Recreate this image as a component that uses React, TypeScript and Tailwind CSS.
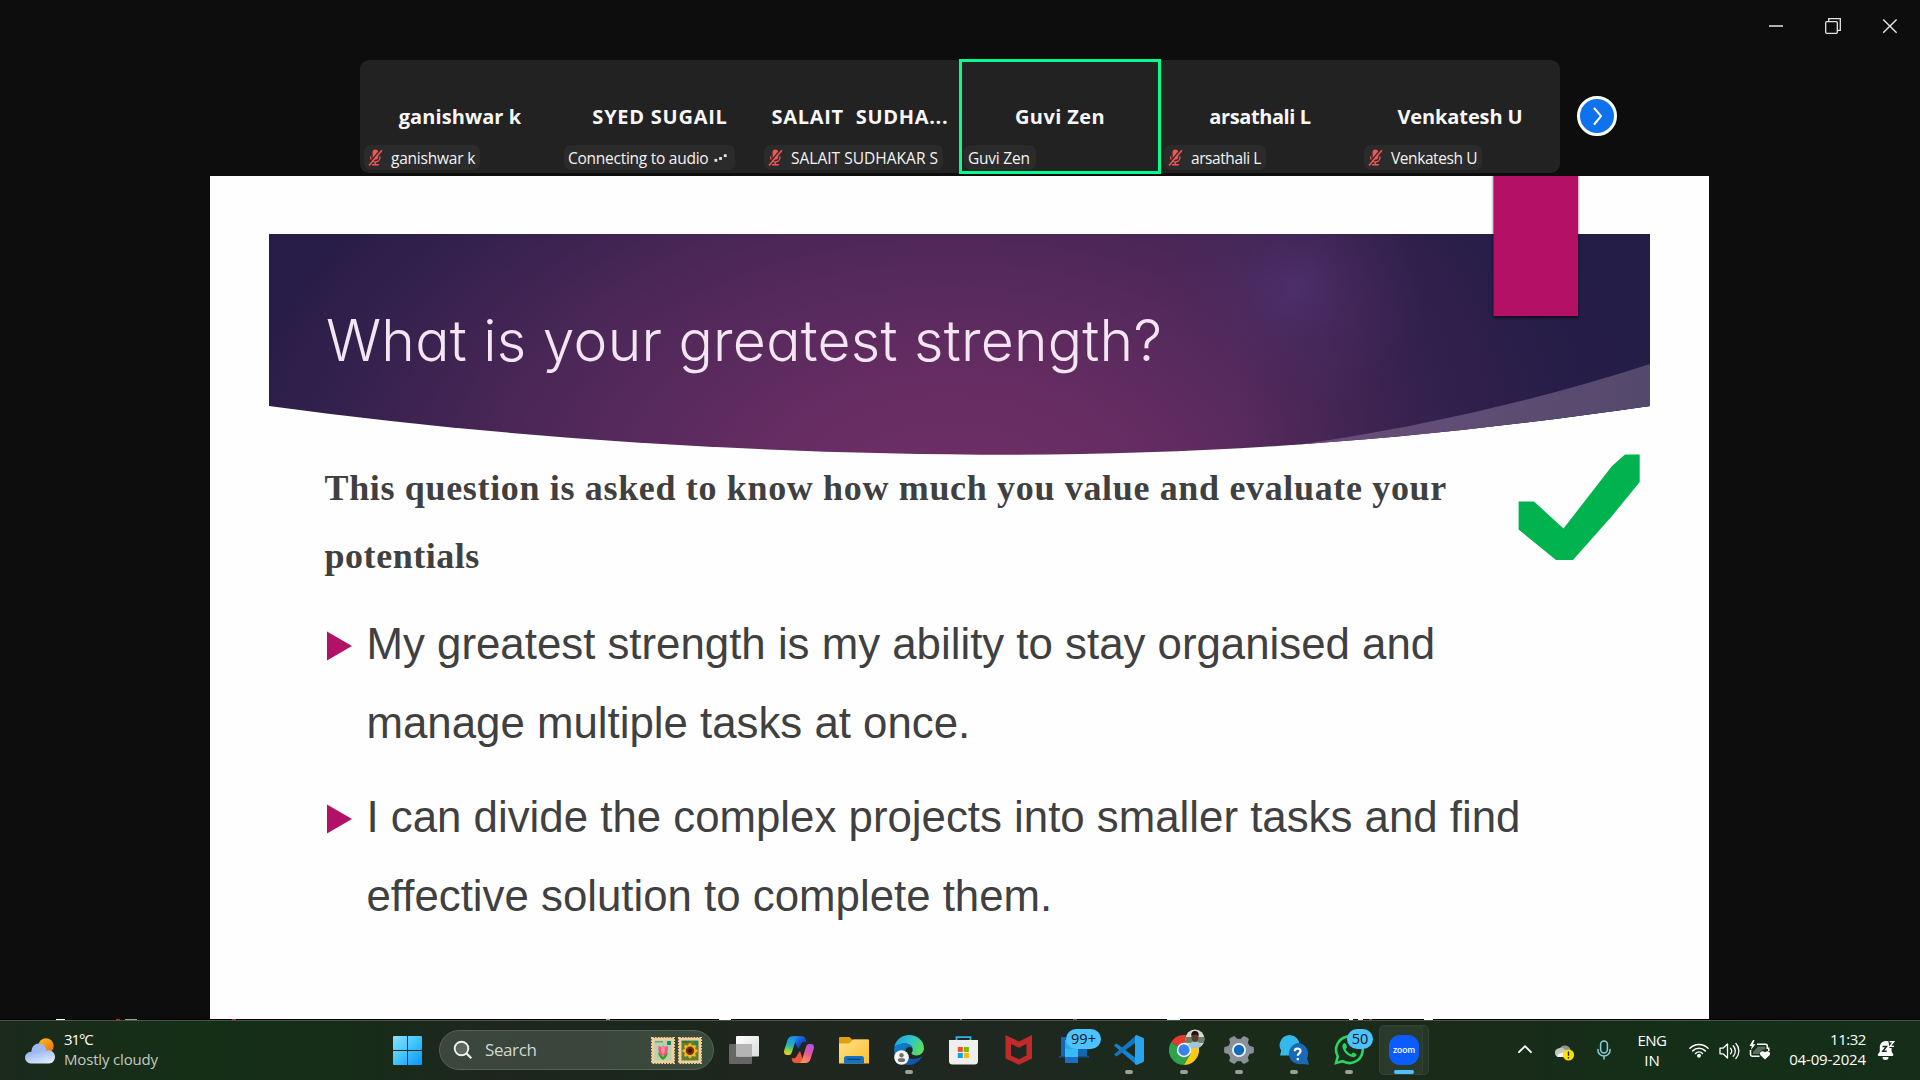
import type { ReactNode } from "react";

type Participant = {
  name: string;
  nameClass: string;
  label: string;
  labelClass: string;
  muted?: boolean;
  connecting?: boolean;
  active?: boolean;
};

const participants: Participant[] = [
  { name: "ganishwar k", nameClass: "tracking-[0.1px]", label: "ganishwar k", labelClass: "tracking-[-0.22px]", muted: true },
  { name: "SYED SUGAIL", nameClass: "tracking-[0.75px]", label: "Connecting to audio", labelClass: "tracking-[-0.26px]", connecting: true },
  { name: "SALAIT  SUDHA...", nameClass: "tracking-[0.7px]", label: "SALAIT SUDHAKAR S", labelClass: "tracking-[0.02px]", muted: true },
  { name: "Guvi Zen", nameClass: "tracking-[0.4px]", label: "Guvi Zen", labelClass: "tracking-[-0.22px]", active: true },
  { name: "arsathali L", nameClass: "tracking-[-0.4px]", label: "arsathali L", labelClass: "tracking-[-0.42px]", muted: true },
  { name: "Venkatesh U", nameClass: "tracking-[-0.1px]", label: "Venkatesh U", labelClass: "tracking-[-0.42px]", muted: true },
];

function MutedMic() {
  return (
    <svg viewBox="0 0 17 17" className="h-[17px] w-[17px] shrink-0">
      <rect x="5.600" y="0.600" width="5.600" height="10" rx="2.800" fill="#f25555" />
      <path d="M3.600 7.500v.8a4.700 4.700 0 0 0 9.400 0v-.8M8.300 13v2.500M4.800 15.800h7" fill="none" stroke="#f25555" strokeWidth="1.400" />
      <path d="M1.400 15 13.400 1" stroke="#2a2a2a" strokeWidth="1.500" />
      <path d="M2 16.400 14.900 1.200" stroke="#f25555" strokeWidth="1.600" />
    </svg>
  );
}

function Tile({ p }: { p: Participant }) {
  return (
    <div className="relative flex h-[113px] w-[200px] shrink-0 flex-col">
      <div className={"whitespace-pre pt-[42px] text-center text-[20px] font-bold leading-[30px] text-[#f7f7f7] " + p.nameClass}>{p.name}</div>
      <div className="mt-[13px] flex pl-[4px]">
        <div
          className={
            "flex h-[25px] items-center rounded-[7px] bg-[#2b2b2b] text-[15.5px] text-[#f4f4f4] " +
            (p.muted ? "gap-[7px] pl-[3px] pr-[5px]" : "gap-[6px] pl-[4px] pr-[6px]")
          }
        >
          {p.muted && <MutedMic />}
          <span className={"whitespace-nowrap pt-[1px] leading-[25px] " + p.labelClass}>{p.label}</span>
          {p.connecting && (
            <svg viewBox="0 0 16 12" className="h-[12px] w-[15px]" fill="#e8e8e8">
              <rect x="0.500" y="7" width="3" height="3" />
              <rect x="5.500" y="5" width="3" height="3" />
              <rect x="10.500" y="2" width="3" height="3" />
            </svg>
          )}
        </div>
      </div>
      {p.active && <div className="absolute -left-[1px] -top-[1px] h-[115px] w-[202px] border-[3px] border-[#00ff8f]" />}
    </div>
  );
}

function Gallery() {
  return (
    <div className="flex h-[116px] shrink-0 items-start pl-[360px]">
      <div className="flex h-[113px] rounded-[9px] bg-[#222222]">
        {participants.map((p) => (
          <Tile key={p.name} p={p} />
        ))}
      </div>
      <div className="ml-[17px] mt-[36px] flex h-[40px] w-[40px] items-center justify-center rounded-full border-[3.5px] border-white bg-[#0e72ed]">
        <svg viewBox="0 0 20 20" className="h-[20px] w-[20px]">
          <path d="M7.500 2.500 14 10.200 7.500 18" fill="none" stroke="#fff" strokeWidth="2" strokeLinecap="round" strokeLinejoin="round" />
        </svg>
      </div>
    </div>
  );
}

const bannerShape = "M59 58H1440V230C1220 262 1020 278.500 800 278.700C560 278.500 300 263 59 230Z";

function Banner() {
  return (
    <svg viewBox="0 0 1500 843" className="absolute left-0 top-0 h-[843px] w-[1500px]">
      <defs>
        <radialGradient id="glow" gradientUnits="userSpaceOnUse" cx="0" cy="0" r="1" gradientTransform="translate(740 320) scale(730 460)">
          <stop offset="0" stopColor="#703066" />
          <stop offset="0.300" stopColor="#632c61" />
          <stop offset="0.600" stopColor="#4c2758" />
          <stop offset="0.850" stopColor="#35214e" />
          <stop offset="1" stopColor="#281d48" />
        </radialGradient>
        <radialGradient id="spot" gradientUnits="userSpaceOnUse" cx="1084" cy="112" r="130">
          <stop offset="0" stopColor="#4f3170" stopOpacity="0.800" />
          <stop offset="0.400" stopColor="#4c2d66" stopOpacity="0.450" />
          <stop offset="1" stopColor="#4a2a60" stopOpacity="0" />
        </radialGradient>
        <linearGradient id="edge" x1="0" x2="1">
          <stop offset="0.700" stopColor="#241d47" stopOpacity="0" />
          <stop offset="0.940" stopColor="#241d47" stopOpacity="0.850" />
          <stop offset="1" stopColor="#241d47" />
        </linearGradient>
        <linearGradient id="sliver" x1="0" x2="1">
          <stop offset="0" stopColor="#6d4c7a" />
          <stop offset="0.500" stopColor="#5f4d74" />
          <stop offset="1" stopColor="#53496c" />
        </linearGradient>
        <filter id="shade" x="-10%" y="-10%" width="120%" height="120%" colorInterpolationFilters="sRGB">
          <feDropShadow dx="0" dy="2" stdDeviation="1.600" floodColor="#000" floodOpacity="0.600" />
        </filter>
        <clipPath id="bannerClip">
          <path d={bannerShape} />
        </clipPath>
      </defs>
      <path d={bannerShape} fill="url(#glow)" />
      <path d={bannerShape} fill="url(#edge)" />
      <g clipPath="url(#bannerClip)">
        <rect x="940" y="58" width="280" height="200" fill="url(#spot)" />
        <path d="M1440 188V290H1084V269.500Q1270 243 1440 188Z" fill="url(#sliver)" />
      </g>
      <rect x="1283.500" y="-6" width="84.500" height="146" fill="#b41166" filter="url(#shade)" />
      <path d="M1308.600 325.500H1324L1353.500 352.500L1402 290L1415 278.500H1429.700V306L1402 340L1363 384H1346L1308.600 353.500Z" fill="#00b34e" />
    </svg>
  );
}

function Bullet({ lines }: { lines: string[] }) {
  return (
    <div className="flex">
      <svg viewBox="0 0 26 32" className="mt-[25px] h-[32px] w-[26px] shrink-0">
        <path d="M1 1.500 26 16 1 30.500Z" fill="#b31166" />
      </svg>
      <div className="ml-[14.5px] text-[43.8px] leading-[78.6px]">
        {lines.map((l) => (
          <div key={l} className="whitespace-nowrap">
            {l}
          </div>
        ))}
      </div>
    </div>
  );
}

function Slide() {
  return (
    <div className="relative ml-[210px] flex h-[843px] w-[1499px] shrink-0 flex-col overflow-hidden bg-[#fefefe] pl-[116px] text-[#404040]">
      <Banner />
      <div className="relative h-[279px] shrink-0 whitespace-nowrap pt-[130px] font-['Inter',sans-serif] text-[57px] font-light leading-[70px] tracking-[0.25px] text-[#f3e6f2] [font-feature-settings:'cv11']">
        What is your greatest strength?
      </div>
      <div className="relative -ml-[1.5px] h-[150px] shrink-0 whitespace-nowrap font-['Liberation_Serif',serif] text-[36px] font-bold leading-[67.5px]">
        <div className="tracking-[0.66px]">This question is asked to know how much you value and evaluate your</div>
        <div className="tracking-[0.54px]">potentials</div>
      </div>
      <div className="relative flex flex-col gap-[16px] font-['Liberation_Sans',sans-serif]">
        <Bullet lines={["My greatest strength is my ability to stay organised and", "manage multiple tasks at once."]} />
        <Bullet lines={["I can divide the complex projects into smaller tasks and find", "effective solution to complete them."]} />
      </div>
    </div>
  );
}

function WindowControls() {
  return (
    <div className="flex h-[60px] shrink-0 items-start justify-end pr-[22px] pt-[17px]">
      <svg viewBox="0 0 130 18" className="h-[18px] w-[130px]" fill="none" stroke="#e6e6e6">
        <path d="M1 9h14" stroke="#b0b0b0" strokeWidth="2" />
        <rect x="57.700" y="4.700" width="11.600" height="11.600" rx="1" strokeWidth="1.300" />
        <path d="M60.700 4.500V1.700H72.300V13.300H69.500" strokeWidth="1.300" />
        <path d="M115.200 2.400 128.600 15.800M128.600 2.400 115.200 15.800" strokeWidth="1.400" />
      </svg>
    </div>
  );
}

const specks = [
  { w: 9, ml: 56, c: "#ffffff" },
  { w: 4, ml: 51, c: "#f0124f" },
  { w: 12, ml: 5, c: "#a0a0a0" },
  { w: 4, ml: 95, c: "#f0124f" },
  { w: 4, ml: 370, c: "#999999" },
  { w: 12, ml: 109, c: "#ffffff" },
  { w: 2, ml: 229, c: "#8c7a20" },
  { w: 4, ml: 111, c: "#555555" },
  { w: 13, ml: 90, c: "#e8f5e8" },
  { w: 4, ml: 169, c: "#ffffff" },
  { w: 5, ml: 5, c: "#ffffff" },
  { w: 3, ml: 6, c: "#f0124f" },
  { w: 9, ml: 52, c: "#ffffff" },
];

function Specks() {
  return (
    <div className="flex h-[1px] shrink-0 bg-black">
      {specks.map((s, i) => (
        <div key={i} className="h-[1px]" style={{ width: s.w, marginLeft: s.ml, backgroundColor: s.c }} />
      ))}
    </div>
  );
}

function Weather() {
  return (
    <svg viewBox="0 0 30 26" className="h-[26px] w-[30px] shrink-0">
      <defs>
        <linearGradient id="sun" x1="0" y1="0" x2="0.600" y2="1">
          <stop offset="0" stopColor="#fbbf24" />
          <stop offset="1" stopColor="#f0700c" />
        </linearGradient>
        <linearGradient id="cloud" x1="0" y1="0" x2="0.600" y2="1">
          <stop offset="0" stopColor="#88aaf0" />
          <stop offset="1" stopColor="#dbe9fd" />
        </linearGradient>
      </defs>
      <circle cx="21" cy="8" r="7.700" fill="url(#sun)" />
      <circle cx="14" cy="13" r="7.600" fill="#9db9f2" />
      <path d="M6 25.400a5.800 5.800 0 0 1-.4-11.600 8.600 8.600 0 0 1 6 1.400A8 8 0 0 1 21 12.800a6.400 6.400 0 0 1 9 5.600c0 4.200-2.600 7-6 7z" fill="url(#cloud)" />
    </svg>
  );
}

function Tulip() {
  return (
    <svg viewBox="0 0 24 27" className="h-[27px] w-[24px]">
      <rect x="1" y="1" width="22" height="25" fill="#f0cf9a" stroke="#f0cf9a" strokeWidth="2" strokeDasharray="1.800 1.100" />
      <rect x="3.500" y="3.500" width="17" height="20" fill="#b9d2ae" />
      <path d="M4 4h8v1.500H4z" fill="#6fa77f" />
      <rect x="16" y="4" width="4" height="4" fill="#1e8a62" />
      <path d="M7 15.500c1 4 2.500 6 5 7.500 2.500-1.500 4-3.500 5-7.500-2 1-3.500 2.200-5 4.500-1.500-2.300-3-3.500-5-4.500z" fill="#3c9a22" />
      <path d="M7.500 9 10 10l2-1.800L14 10l2.800-1c.5 5-.8 9.500-4.800 9.500S7 14 7.500 9z" fill="#f4547c" />
      <path d="M10.500 10.500 12 8.500l1.600 2c.6 3 .2 5.500-1.600 7-1.800-1.500-2.200-4-1.500-7z" fill="#fb8fa6" />
    </svg>
  );
}

function Sunflower() {
  return (
    <svg viewBox="0 0 24 27" className="h-[27px] w-[24px]">
      <rect x="1" y="1" width="22" height="25" fill="#f0cf9a" stroke="#f0cf9a" strokeWidth="2" strokeDasharray="1.800 1.100" />
      <rect x="3.500" y="3.500" width="17" height="20" fill="#5f7f35" />
      <path d="M4 4h8v1.500H4z" fill="#3b6a38" />
      <rect x="16" y="4" width="4" height="4" fill="#1c8a52" />
      <g fill="#f7b71a">
        {[0, 45, 90, 135].map((a) => (
          <ellipse key={a} cx="12" cy="13.800" rx="7.800" ry="2.700" transform={`rotate(${a} 12 13.8)`} />
        ))}
      </g>
      <circle cx="12" cy="13.800" r="4.200" fill="#7a2c12" />
      <circle cx="12" cy="13.800" r="2" fill="#45150b" />
    </svg>
  );
}

function Badge({ children, className }: { children: ReactNode; className: string }) {
  return (
    <div className={"absolute flex h-[20px] items-center justify-center rounded-full bg-[#4cc2ff] text-[14.5px] leading-[20px] text-[#0b1720] " + className}>{children}</div>
  );
}

function AppIcon({ children, running, active, badge }: { children: ReactNode; running?: boolean; active?: boolean; badge?: ReactNode }) {
  return (
    <div className="relative flex h-[60px] w-[30px] shrink-0 flex-col items-center pt-[15px]">
      {active && (
        <>
          <div className="absolute -left-[10px] top-[5px] h-[50px] w-[50px] rounded-[5px] border border-[#334234] bg-[#253626]" />
          <div className="absolute -left-[10px] top-[5px] h-[50px] w-[44px] rounded-[5px] border border-[#334234] bg-[#2a3a2b]" />
        </>
      )}
      <svg viewBox="0 0 30 30" className="relative h-[30px] w-[30px] shrink-0">
        {children}
      </svg>
      {running && <div className="mt-[5px] h-[4px] w-[8px] rounded-full bg-[#99a098]" />}
      {active && <div className="relative mt-[5px] h-[4px] w-[20px] shrink-0 rounded-full bg-[#4cc2ff]" />}
      {badge}
    </div>
  );
}

function Apps() {
  return (
    <div className="flex gap-[25px]">
      <AppIcon>
        <defs>
          <linearGradient id="tvFront" x1="0" y1="0" x2="1" y2="1">
            <stop offset="0" stopColor="#fff" />
            <stop offset="1" stopColor="#dcdcdc" />
          </linearGradient>
        </defs>
        <rect x="0" y="9" width="23" height="20" rx="1" fill="#666" />
        <rect x="7" y="1" width="23" height="20.500" rx="1" fill="url(#tvFront)" />
        <path d="M7 9h16v12.500H8a1 1 0 0 1-1-1z" fill="#b4b4b4" />
      </AppIcon>
      <AppIcon>
        <defs>
          <linearGradient id="cpA" x1="0.500" y1="0" x2="0.300" y2="1">
            <stop offset="0" stopColor="#178fe8" />
            <stop offset="0.500" stopColor="#27b2b9" />
            <stop offset="0.750" stopColor="#8fd04a" />
            <stop offset="1" stopColor="#f4d30c" />
          </linearGradient>
          <linearGradient id="cpB" x1="0.800" y1="0" x2="0.300" y2="1">
            <stop offset="0" stopColor="#a855f0" />
            <stop offset="0.450" stopColor="#e653a2" />
            <stop offset="1" stopColor="#ff9a4d" />
          </linearGradient>
          <linearGradient id="cpC" x1="0" y1="0" x2="1" y2="1">
            <stop offset="0" stopColor="#1f9cf5" />
            <stop offset="0.600" stopColor="#1446c8" />
            <stop offset="1" stopColor="#0f3bb0" />
          </linearGradient>
        </defs>
        <path d="M17 9.500C18 7 19 6.500 22.500 6.800L22 5C21.400 2.700 20.500 1.200 18 1.200H8.500L14 14z" fill="url(#cpC)" />
        <path d="M13 20.500C12 23 11 23.500 7.500 23.200L8 25c.6 2.300 1.500 2.900 4 2.900h8L16 16z" fill="#f2573e" />
        <path d="M8.500 1.200H15c-2 0-2.700 2-3.300 4L8 17c-.8 2.500-2 3-4 3H3C.5 20-.5 18 .3 15L3.500 5c.8-2.500 2.300-3.800 5-3.800z" fill="url(#cpA)" />
        <path d="M21.500 27.900H15c2 0 2.700-2 3.300-4L22 12c.8-2.500 2-3 4-3h1c2.500 0 3.500 2 2.700 5L26.500 24c-.8 2.500-2.300 3.900-5 3.900z" fill="url(#cpB)" />
      </AppIcon>
      <AppIcon>
        <defs>
          <linearGradient id="folder" x1="0" y1="0" x2="1" y2="1">
            <stop offset="0" stopColor="#ffe08a" />
            <stop offset="1" stopColor="#fbc02d" />
          </linearGradient>
        </defs>
        <path d="M0 3a1 1 0 0 1 1-1h8.500c1 0 1.500.3 2.300 1.200L13 4.500h16a1 1 0 0 1 1 1V12H0z" fill="#e0a20c" />
        <path d="M0 8.500h9c1.500 0 2-.5 3-1.700l1.300-1.500c.5-.5 1-.8 1.700-.8h14a1 1 0 0 1 1 1V28.500H0z" fill="url(#folder)" />
        <path d="M5 28.500V23.500a2.500 2.500 0 0 1 2.500-2.500h15a2.500 2.500 0 0 1 2.500 2.500v5z" fill="#1273c4" />
        <path d="M8.500 24.300h13" stroke="#0a3f78" strokeWidth="1.200" />
      </AppIcon>
      <AppIcon running>
        <defs>
          <linearGradient id="edgeTop" x1="0" y1="0.300" x2="1" y2="0.600">
            <stop offset="0" stopColor="#1fa5dc" />
            <stop offset="0.500" stopColor="#30c3d0" />
            <stop offset="1" stopColor="#5fe04f" />
          </linearGradient>
          <linearGradient id="edgeBody" x1="0" y1="0" x2="1" y2="1">
            <stop offset="0" stopColor="#1484d8" />
            <stop offset="1" stopColor="#0c4a9c" />
          </linearGradient>
        </defs>
        <path d="M.4 12C1.500 5 7.500 0 15 0c8.500 0 15 6 15 13 0 4.500-3.500 7.500-7.500 7.500-3 0-5-1-5-2.200 0-.9 1.200-1.300 1.200-3.600C18.700 11 15 8.500 11 8.500 6 8.500 2 10.500.4 12z" fill="url(#edgeTop)" />
        <path d="M.2 13C2 9.500 6.500 8.400 11 8.500c4 .1 6.500 2 7.300 4.500-1.500-1.500-5-1.500-6.500 1.500-2 4 1 9.500 7 9.500 3.500 0 6-1 8.200-2.300.6-.3 1 .2.6.8C25 26.500 20.500 30 15 30 6.500 30-.7 23 .2 13z" fill="url(#edgeBody)" />
        <circle cx="7.500" cy="22.500" r="7.300" fill="#f5f5f5" />
        <circle cx="7.500" cy="20.200" r="2.200" fill="#707070" />
        <rect x="3.800" y="23.300" width="7.400" height="3.600" rx="1.800" fill="#707070" />
      </AppIcon>
      <AppIcon>
        <path d="M7.500 6V2.200h14V6" fill="none" stroke="#2cb5ea" strokeWidth="1.800" />
        <path d="M0 5h29v21a3.500 3.500 0 0 1-3.500 3.500h-22A3.500 3.500 0 0 1 0 26z" fill="#efefef" />
        <rect x="8.800" y="12" width="5" height="5" fill="#f25022" />
        <rect x="14.900" y="12" width="5" height="5" fill="#7fba00" />
        <rect x="8.800" y="18" width="5" height="5" fill="#00a4ef" />
        <rect x="14.900" y="18" width="5" height="5" fill="#ffb900" />
      </AppIcon>
      <AppIcon>
        <path fillRule="evenodd" d="M1.500 0 15 6.500 28 0V23.500L15 29.800 1.500 23.500zM7 9v11.500L15 24.300l7.500-3.800V9L15 12.800z" fill="#bf2a2a" />
      </AppIcon>
      <AppIcon badge={<Badge className="left-[7px] top-[9px] w-[35px]">99+</Badge>}>
        <path d="M2 2h26v20H2z" fill="#1565b5" />
        <path d="M0 21h30v1.500H0z" fill="#0f4f94" />
        <path d="M6 5h13v23H6z" fill="#2aaee8" />
        <path d="M6 14h13v8H6z" fill="#35bdf2" />
        <path d="M6 22h13v6H6z" fill="#1c6cc4" />
      </AppIcon>
      <AppIcon running>
        <path d="M0 10.500 2.500 8.500 22.500 23.500V30z" fill="#1384cf" />
        <path d="M0 19.500 2.500 21.600 22.500 7V0z" fill="#0f78c0" />
        <path d="M22.500 0 29 2.800q1 .4 1 1.400V25.800q0 1-1 1.400L22.500 30 21 29V1z" fill="#2ba4ee" />
      </AppIcon>
      <AppIcon
        running
        badge={
          <svg viewBox="0 0 20 20" className="absolute left-[16px] top-[9px] h-[20px] w-[20px]">
            <defs>
              <clipPath id="avatar">
                <circle cx="10" cy="10" r="9.500" />
              </clipPath>
            </defs>
            <g clipPath="url(#avatar)">
              <rect width="20" height="20" fill="#d8d8d4" />
              <rect y="8" width="20" height="6" fill="#6d7f66" />
              <path d="M3 20c0-5 3-7.500 7-7.500s7 2.500 7 7.500z" fill="#9fc5d8" />
              <ellipse cx="10" cy="8" rx="3.600" ry="5" fill="#5a3b2c" />
              <path d="M6.200 7c0-4 1.500-5 3.800-5s3.800 1 3.800 5c-1-2-6.600-2-7.600 0z" fill="#1c1512" />
            </g>
          </svg>
        }
      >
        <path d="M15 15 2 7.500A15 15 0 0 1 28 7.500H15z" fill="#e53b2f" />
        <path d="M15 15 2 7.500A15 15 0 0 0 15 30l6.500-11.200z" fill="#2fa24c" />
        <path d="M28 7.500H15L21.500 18.800 15 30A15 15 0 0 0 28 7.500z" fill="#fbc816" />
        <circle cx="15" cy="15" r="7.200" fill="#fff" />
        <circle cx="15" cy="15" r="5.700" fill="#3a82ee" />
      </AppIcon>
      <AppIcon running>
        <g fill="#8a9098">
          <circle cx="15" cy="15" r="11.300" />
          {[0, 60, 120, 180, 240, 300].map((a) => (
            <path key={a} d="M24 10.500 29.500 12q.8 3 0 6L24 19.500z" transform={`rotate(${a} 15 15)`} />
          ))}
        </g>
        <circle cx="15" cy="15" r="7" fill="#f2f2f2" />
        <circle cx="15" cy="15" r="5.200" fill="#0f6cbd" />
      </AppIcon>
      <AppIcon running>
        <path d="M10.500 0a10.200 10.200 0 0 1 0 20.400H1l1.200-4.800A10.200 10.200 0 0 1 10.500 0z" fill="#35b8ea" />
        <path d="M18.500 8a10.600 10.600 0 0 1 9.600 15.200L30 29.700l-7-.6A10.700 10.700 0 1 1 18.500 8z" fill="#1a68b8" />
        <path d="M15.700 16.300c0-3.600 5.800-3.500 5.800-.2 0 2.200-2.700 2.300-2.700 4.600M18.800 23v2.300" fill="none" stroke="#fff" strokeWidth="2.200" />
      </AppIcon>
      <AppIcon running badge={<Badge className="left-[13px] top-[9px] w-[26px]">50</Badge>}>
        <path d="M2 28 3.800 21.300A13.300 13.300 0 1 1 8.600 26.200z" fill="#1a2e1a" stroke="#2bd366" strokeWidth="2.600" />
        <path d="M10.800 8c-1.700.2-2.800 2-2.300 4.200 1 4.600 5.200 8.900 9.900 9.900 2 .4 4-.6 4.200-2.600 0-.6-3.200-2.300-3.700-2.100-.7.2-1.200 1.900-1.900 1.900-1.600-.4-4.700-3.300-5.300-5 0-.6 1.300-1.300 1.400-2 0-.5-1.300-4.200-2.300-4.300z" fill="#2bd366" />
      </AppIcon>
      <AppIcon active>
        <rect x="0" y="0" width="30" height="30" rx="11" fill="#0b5cff" />
        <text x="15" y="17.600" textAnchor="middle" fontSize="9.500" fontWeight="600" fontFamily="Lato, sans-serif" fill="#fff" textLength="22" lengthAdjust="spacingAndGlyphs">
          zoom
        </text>
      </AppIcon>
    </div>
  );
}

function Tray() {
  return (
    <div className="ml-auto flex h-[60px] items-start pr-[25px] text-[15px] leading-[20px] text-white">
      <svg viewBox="0 0 16 10" className="mt-[23px] h-[10px] w-[16px]">
        <path d="M2 8.200 8 2.200l6 6" fill="none" stroke="#fff" strokeWidth="1.900" strokeLinecap="round" strokeLinejoin="round" />
      </svg>
      <svg viewBox="0 0 21 18" className="ml-[21px] mt-[22px] h-[18px] w-[21px]">
        <path d="M6 5a6 6 0 0 1 10.500 1.500l2 5L8 13z" fill="#8f958f" />
        <path d="M4.500 14a4.400 4.400 0 0 1-.5-8.500 7 7 0 0 1 8 2L14 14z" fill="#c2c7c2" />
        <path d="M3 13.500c1-3.500 6-5 9-2.500v3H4z" fill="#f4f4f4" />
        <circle cx="14.500" cy="12" r="5.600" fill="#fde100" />
        <path d="M14.500 8.500v4.300M14.500 14v1.600" stroke="#222" strokeWidth="1.400" />
      </svg>
      <svg viewBox="0 0 14 20" className="ml-[22px] mt-[19px] h-[20px] w-[14px]" fill="none" stroke="#86cfe0" strokeWidth="1.500" strokeLinecap="round">
        <rect x="3.600" y="1" width="6.800" height="12" rx="3.400" />
        <path d="M.9 9.500v.5a6.100 6.100 0 0 0 12.200 0v-.5M7 16.200V19" />
      </svg>
      <div className="ml-[25px] mt-[9px] flex w-[32px] flex-col items-center">
        <span className="tracking-[-0.5px]">ENG</span>
        <span>IN</span>
      </div>
      <svg viewBox="0 0 20 16" className="ml-[21px] mt-[21px] h-[16px] w-[20px]" fill="none" stroke="#fff" strokeWidth="1.500" strokeLinecap="round">
        <path d="M.9 6.200a12.800 12.800 0 0 1 18.200 0" />
        <path d="M3.700 8.900a8.900 8.900 0 0 1 12.600 0" />
        <path d="M6.500 11.500a5 5 0 0 1 7 0" />
        <circle cx="10" cy="13.800" r="1.200" fill="#fff" />
      </svg>
      <svg viewBox="0 0 21 18" className="ml-[10px] mt-[21px] h-[18px] w-[21px]" fill="none" stroke="#fff" strokeWidth="1.300" strokeLinecap="round" strokeLinejoin="round">
        <path d="M1 6.200h3L8.500 2v14L4 11.800H1z" />
        <path d="M11.500 6.300a4 4 0 0 1 0 5.400M14.200 3.800a7.500 7.500 0 0 1 0 10.400M16.900 1.500a11 11 0 0 1 0 15" />
      </svg>
      <svg viewBox="0 0 21 20" className="ml-[9px] mt-[19px] h-[20px] w-[21px]">
        <path d="M8 4.300h8.500A1.800 1.800 0 0 1 18.300 6V9M10.500 16.200H3.300A1.800 1.800 0 0 1 1.500 14.500V10" fill="none" stroke="#fff" strokeWidth="1.600" />
        <path d="M19 7.500h1.500v3.500H19z" fill="#fff" />
        <path d="M9 6.500h7.300V9.500C13 9.500 10.300 11.500 10.800 14H4V12z" fill="#fff" opacity="0.300" />
        <path d="M4 0 .5 6h2.300L2 9.800 6.500 4.300H4L5.500 0z" fill="#fff" />
        <path d="M16 19.500 11.500 15.300C9.500 12.500 13 9.500 16 12.300c3-2.800 6.500.2 4.500 3z" fill="#fff" />
      </svg>
      <div className="ml-[18px] mt-[8px] flex w-[78px] flex-col items-end">
        <span className="tracking-[-0.45px]">11:32</span>
        <span className="tracking-[-0.14px]">04-09-2024</span>
      </div>
      <svg viewBox="0 0 18 20" className="ml-[11px] mt-[19px] h-[20px] w-[18px]">
        <path d="M8.500 1C5 1.300 2.800 4 2.800 7.300V11.500L1 14.300c-.5.800 0 1.700.9 1.700h13.400c.9 0 1.400-.9.900-1.700L14.600 11.500V7L14 1.500z" fill="#fff" />
        <path d="M5.500 17h6a3 3 0 0 1-6 0z" fill="#fff" />
        <path d="M11.200 0H18v8h-5.500z" fill="#15301a" />
        <path d="M5.500 6.500h4L5.800 11.200h4" fill="none" stroke="#15301a" strokeWidth="1.500" />
        <path d="M12.600 1.800h4l-3.600 4.600h4" fill="none" stroke="#fff" strokeWidth="1.400" />
      </svg>
    </div>
  );
}

function Taskbar() {
  return (
    <div className="flex h-[60px] shrink-0 items-start border-t border-[#4a524a] bg-[linear-gradient(90deg,#1b2a1b_0px,#152f17_180px,#162e18_330px,#1e261f_500px,#1b281c_640px,#1f261f_760px,#1e2820_1000px,#1a2b1a_1200px,#1a2b19_1450px,#142f18_1700px,#152d19_1920px)]">
      <div className="flex w-[393px] shrink-0 pl-[25px]">
        <div className="pt-[17px]">
          <Weather />
        </div>
        <div className="ml-[9px] pt-[8px] text-[15px] leading-[20px]">
          <div className="tracking-[-1.1px] text-white">31°C</div>
          <div className="tracking-[-0.17px] text-[#c3c9c3]">Mostly cloudy</div>
        </div>
      </div>
      <svg viewBox="0 0 29 29" className="mt-[15px] h-[29px] w-[29px] shrink-0">
        <defs>
          <linearGradient id="win" x1="0" y1="0" x2="1" y2="1">
            <stop offset="0" stopColor="#8be2ff" />
            <stop offset="0.500" stopColor="#40c4fc" />
            <stop offset="1" stopColor="#0a94fa" />
          </linearGradient>
        </defs>
        <path d="M0 1q0-1 1-1H14V14H0zM15 0H28q1 0 1 1V14H15zM0 15H14V29H1q-1 0-1-1zM15 15H29V28q0 1-1 1H15z" fill="url(#win)" />
      </svg>
      <div className="ml-[17px] mt-[9px] flex h-[40px] w-[275px] shrink-0 items-center rounded-full border border-[#566156] bg-[linear-gradient(90deg,#3b463c,#3a453c_50%,#394c39)] pl-[13px]">
        <svg viewBox="0 0 20 20" className="h-[20px] w-[20px]">
          <circle cx="8.500" cy="8.500" r="6.800" fill="#5d675f" stroke="#eef1ee" strokeWidth="1.900" />
          <path d="M13.500 13.500 18.300 18.300" stroke="#eef1ee" strokeWidth="2.200" />
        </svg>
        <span className="ml-[12px] text-[17px] leading-[38px] tracking-[-0.4px] text-[#d3d8d3]">Search</span>
        <div className="ml-auto flex gap-[3px] pr-[11px]">
          <Tulip />
          <Sunflower />
        </div>
      </div>
      <div className="-mt-[1px] ml-[15px]">
        <Apps />
      </div>
      <Tray />
    </div>
  );
}

export default function App() {
  return (
    <div className="flex h-[1080px] w-[1920px] flex-col overflow-hidden bg-[#0d0d0d] font-['Open_Sans','Noto_Sans',sans-serif]">
      <WindowControls />
      <Gallery />
      <Slide />
      <Specks />
      <Taskbar />
    </div>
  );
}
